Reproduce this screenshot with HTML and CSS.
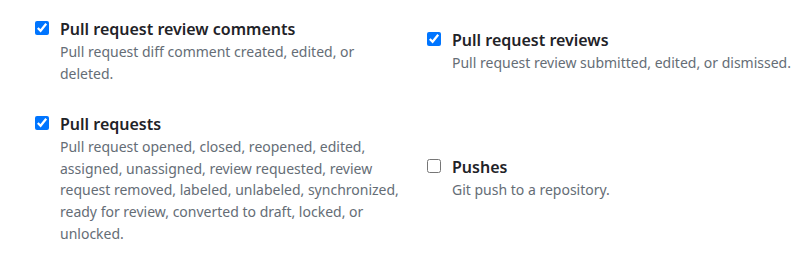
FILE: index.html
```html
<!DOCTYPE html>
<html>
<head>
<meta charset="utf-8">
<link rel="stylesheet" href="styles.css">
</head>
<body>
<div class="events">
  <label class="event">
    <input type="checkbox" class="event-check" checked>
    <span class="event-text">
      <span class="event-title">Pull request review comments</span>
      <span class="event-desc">Pull request diff comment created, edited, or deleted.</span>
    </span>
  </label>
  <label class="event">
    <input type="checkbox" class="event-check" checked>
    <span class="event-text">
      <span class="event-title">Pull request reviews</span>
      <span class="event-desc">Pull request review submitted, edited, or dismissed.</span>
    </span>
  </label>
  <label class="event">
    <input type="checkbox" class="event-check" checked>
    <span class="event-text">
      <span class="event-title">Pull requests</span>
      <span class="event-desc">Pull request opened, closed, reopened, edited, assigned, unassigned, review requested, review request removed, labeled, unlabeled, synchronized, ready for review, converted to draft, locked, or unlocked.</span>
    </span>
  </label>
  <label class="event">
    <input type="checkbox" class="event-check">
    <span class="event-text">
      <span class="event-title">Pushes</span>
      <span class="event-desc">Git push to a repository.</span>
    </span>
  </label>
</div>
</body>
</html>
```

FILE: styles.css
```css
html, body {
  margin: 0;
  padding: 0;
  background: #ffffff;
}

body {
  font-family: "Segoe UI", "Noto Sans", sans-serif;
  color: #1f2328;
}

.events {
  display: grid;
  grid-template-columns: 372px 1fr;
  column-gap: 20px;
  row-gap: 28px;
  align-items: center;
  padding: 17px 0 0 35px;
}

.event {
  display: flex;
  align-items: flex-start;
  gap: 11px;
}

.event-check {
  flex: none;
  width: 14px;
  height: 14px;
  margin: 4px 0 0 0;
}

.event-text {
  display: flex;
  flex-direction: column;
}

.event-title {
  font-size: 16px;
  font-weight: 600;
  line-height: 24px;
  color: #1f2328;
}

.event-desc {
  font-size: 14px;
  line-height: 21.6px;
  color: #656d76;
}
```
